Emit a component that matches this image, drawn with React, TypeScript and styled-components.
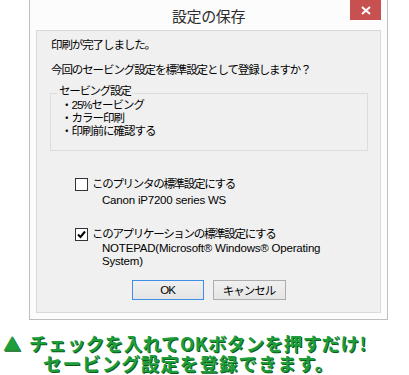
import React from "react";
import styled, { createGlobalStyle } from "styled-components";

const GlobalStyle = createGlobalStyle`
  body {
    margin: 0;
    background: #ffffff;
    font-family: "Liberation Sans", "Noto Sans CJK JP", sans-serif;
  }
`;

const Page = styled.div`
  width: 409px;
  height: 375px;
  overflow: hidden;
`;

const Window = styled.div`
  width: 359px;
  margin-left: 29px;
  box-sizing: border-box;
  background: #fcfcfc;
  border: 1px solid #bfbfbf;
  border-top: none;
  padding: 0 6px 6px 6px;
`;

const TitleBar = styled.div`
  height: 30px;
  display: grid;
  grid-template-columns: 1fr auto 1fr;
  align-items: start;
`;

const Title = styled.div`
  grid-column: 2;
  font-family: "Noto Sans CJK JP", sans-serif;
  font-size: 15px;
  line-height: 30px;
  color: #2e2e2e;
  letter-spacing: -0.4px;
  padding-top: 1px;
`;

const CloseButton = styled.div`
  grid-column: 3;
  justify-self: end;
  width: 31px;
  height: 20px;
  background: #c75050;
  display: flex;
  align-items: center;
  justify-content: center;
`;

const Panel = styled.div`
  background: #f0f0f0;
  border: 1px solid #d9d9d9;
  padding: 6px 12px 12px 14px;
  color: #000;
  font-size: 11.5px;
`;

const Line = styled.div<{ $top?: number }>`
  line-height: 16px;
  margin-top: ${(p) => p.$top ?? 0}px;
  letter-spacing: -1.1px;
  white-space: nowrap;
`;

const GroupBox = styled.div`
  position: relative;
  margin: 15px 0 0 -1px;
  border: 1px solid #dcdcdc;
  padding: 5px 8px 12px 10px;
`;

const Legend = styled.span`
  position: absolute;
  left: 6px;
  top: -11px;
  padding: 0 2px;
  background: #f0f0f0;
  line-height: 16px;
  letter-spacing: -1.3px;
`;

const Item = styled.div`
  line-height: 13px;
  letter-spacing: -1px;
  white-space: nowrap;
`;

const CheckRow = styled.div<{ $top: number }>`
  display: flex;
  align-items: center;
  gap: 4px;
  margin: ${(p) => p.$top}px 0 0 24px;
  line-height: 16px;
  letter-spacing: -1.3px;
  white-space: nowrap;
`;

const Box = styled.span`
  width: 11px;
  height: 11px;
  border: 1px solid #333333;
  background: #ffffff;
  display: flex;
  align-items: center;
  justify-content: center;
  flex-shrink: 0;
`;

const SubText = styled.div<{ $lh: number }>`
  margin-left: 51px;
  line-height: ${(p) => p.$lh}px;
  max-width: 240px;
  letter-spacing: -0.2px;
`;

const Buttons = styled.div`
  display: flex;
  justify-content: center;
  gap: 9px;
  margin-top: 12px;
  padding-right: 2px;
`;

const Button = styled.div<{ $focus?: boolean; $w: number }>`
  width: ${(p) => p.$w}px;
  height: 20px;
  box-sizing: border-box;
  border: 1px solid ${(p) => (p.$focus ? "#3c8ee6" : "#adadad")};
  background: linear-gradient(#f0f0f0, #e5e5e5);
  display: flex;
  align-items: center;
  justify-content: center;
  font-size: 11.5px;
  letter-spacing: -1px;
`;

const Caption = styled.div`
  margin-top: 13px;
  padding-left: 3px;
  font-family: "Noto Sans CJK JP", sans-serif;
  color: #1e9e3a;
  font-weight: 700;
  font-size: 18.5px;
  line-height: 20px;
  letter-spacing: 0.45px;
  text-shadow: 1px 1px 0 #0d5c1e;
  white-space: nowrap;
`;

const Triangle = styled.span`
  margin-right: 8px;
  font-size: 18px;
  letter-spacing: 0;
`;

const SecondLine = styled.div`
  padding-left: 40px;
  letter-spacing: 1.05px;
`;

const Check = () => (
  <svg width="9" height="9" viewBox="0 0 9 9">
    <polyline points="1,4.5 3.5,7 8,1.5" fill="none" stroke="#000" strokeWidth="2" />
  </svg>
);

const Cross = () => (
  <svg width="10" height="9" viewBox="0 0 10 9">
    <path d="M1 1 L9 8 M9 1 L1 8" stroke="#fff" strokeWidth="2" />
  </svg>
);

export default function App() {
  return (
    <Page>
      <GlobalStyle />
      <Window>
        <TitleBar>
          <Title>設定の保存</Title>
          <CloseButton>
            <Cross />
          </CloseButton>
        </TitleBar>
        <Panel>
          <Line>印刷が完了しました。</Line>
          <Line $top={9}>今回のセービング設定を標準設定として登録しますか？</Line>
          <GroupBox>
            <Legend>セービング設定</Legend>
            <Item>・25%セービング</Item>
            <Item>・カラー印刷</Item>
            <Item>・印刷前に確認する</Item>
          </GroupBox>
          <CheckRow $top={25}>
            <Box />
            このプリンタの標準設定にする
          </CheckRow>
          <SubText $lh={16}>Canon iP7200 series WS</SubText>
          <CheckRow $top={18}>
            <Box>
              <Check />
            </Box>
            このアプリケーションの標準設定にする
          </CheckRow>
          <SubText $lh={13}>NOTEPAD(Microsoft® Windows® Operating System)</SubText>
          <Buttons>
            <Button $focus $w={72}>OK</Button>
            <Button $w={73}>キャンセル</Button>
          </Buttons>
        </Panel>
      </Window>
      <Caption>
        <div>
          <Triangle>▲</Triangle>チェックを入れてOKボタンを押すだけ!
        </div>
        <SecondLine>セービング設定を登録できます。</SecondLine>
      </Caption>
    </Page>
  );
}
